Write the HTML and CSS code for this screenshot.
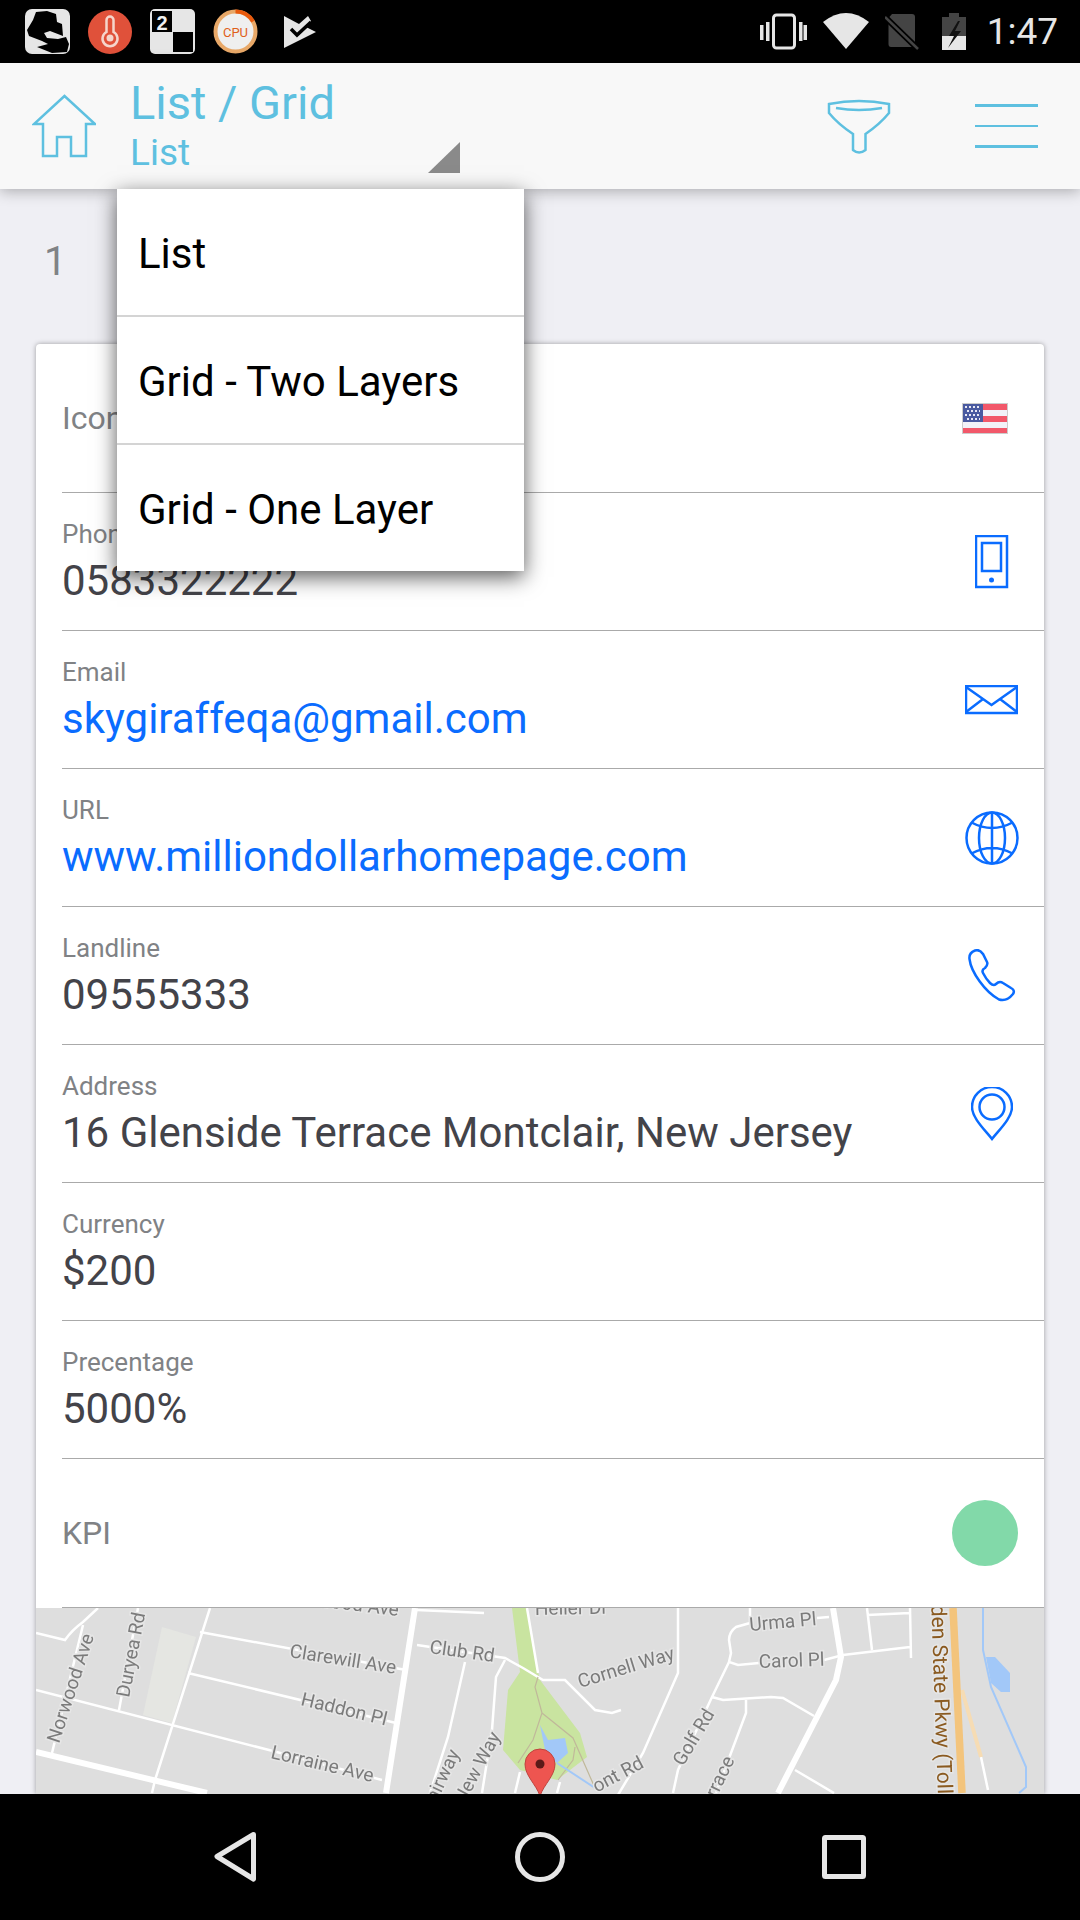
FILE: index.html
```html
<!DOCTYPE html>
<html>
<head>
	<meta charset="utf-8">
	<meta name="viewport" content="width=device-width, initial-scale=1">
	<title>List / Grid</title>
	<link rel="stylesheet" href="styles.css">
</head>
<body>

    <div class="status-bar">
        <div class="status-left">
            <svg class="glyph" width="45" height="45" viewBox="25 9 45 45">
                <rect class="light" x="25" y="9" width="45" height="45" rx="7"/>
                <path class="dark" d="M27 30 L33 20 L36 12 L47 11 L56 14 L57 22 L62 24 L63 36 L50 31 L44 33 L47 38 L58 39 L66 37 L69 44 L67 52 L52 53 L37 47 L48 44 L42 41 L29 36 Z"/>
            </svg>
            <svg class="glyph" width="44" height="44" viewBox="88 9 44 44">
                <circle class="temp-bg" cx="110" cy="31" r="22"/>
                <path class="temp-line" d="M106.500 31 V19 A3.500 3.500 0 0 1 113.500 19 V31 A7.500 7.500 0 1 1 106.500 31 Z"/>
                <circle class="temp-dot" cx="110" cy="37" r="3.500"/>
            </svg>
            <svg class="glyph" width="45" height="45" viewBox="151 9 45 45">
                <rect class="light" x="151" y="9" width="45" height="45" rx="5"/>
                <rect class="dark" x="153" y="11" width="20" height="21"/>
                <rect class="dark" x="174" y="32" width="20" height="20"/>
                <text class="two" x="163" y="30" text-anchor="middle">2</text>
            </svg>
            <svg class="glyph" width="45" height="45" viewBox="214 9 45 45">
                <circle class="cpu-bg" cx="236.500" cy="31.500" r="20"/>
                <path class="cpu-arc" d="M236.500 11.500 A20 20 0 0 1 254 21.500"/>
                <text class="cpu" x="236.500" y="36.500" text-anchor="middle">CPU</text>
            </svg>
            <svg class="glyph glyph-check" width="33" height="34" viewBox="284 15 33 34">
                <path class="light" d="M285 16 L300 24 L309 16 L312 21 L307 27 L317 32 L285 48 Z"/>
                <path class="check-line" d="M292 29 L298 35 L312 22"/>
            </svg>
        </div>
        <div class="status-right">
            <svg class="glyph" width="47" height="37" viewBox="761 13 47 37">
                <rect class="outline" x="774.500" y="15" width="21" height="33" rx="3"/>
                <path class="light" d="M761 25 H764.500 V40 H761 Z M767 22 H770.500 V41 H767 Z M800 22 H803.500 V41 H800 Z M804.500 25 H808 V40 H804.500 Z"/>
            </svg>
            <svg class="glyph" width="46" height="37" viewBox="823 13 46 37">
                <path class="light" d="M823 22 Q846 4 869 22 L846 49 Z"/>
            </svg>
            <svg class="glyph" width="34" height="37" viewBox="886 13 34 37">
                <path class="sim" d="M893 14 H913 Q916 14 916 17 V44 Q916 47 913 47 H892 Q889.500 47 889.500 44 V18 Z"/>
                <path class="sim-cut" d="M886 17 L919 49"/>
                <path class="sim-line" d="M886 17 L919 49"/>
            </svg>
            <svg class="glyph glyph-battery" width="24" height="38" viewBox="943 12 24 38">
                <path class="sim" d="M950 12 H960 V16 H967 V35 H943 V16 H950 Z"/>
                <rect class="light" x="943" y="35" width="24" height="14"/>
                <path class="bolt" d="M959 20 L950 35 H955 L949 47 L962 30 H956 L961 20 Z"/>
            </svg>
            <span class="clock">1:47</span>
        </div>
    </div>

    <div class="app-header">
        <svg class="icon-home" width="64" height="64" viewBox="32 95 64 64">
            <path class="head-line" d="M64.500 97 L34 125 H43 V157 H57 V138 H71 V157 H86 V125 H95 Z"/>
        </svg>
        <div class="spinner">
            <div class="titles">
                <div class="title">List / Grid</div>
                <div class="subtitle">List</div>
            </div>
            <svg class="caret" width="32" height="31" viewBox="0 0 32 31">
                <path d="M32 0 V31 H0 Z"/>
            </svg>
        </div>
        <svg class="icon-filter" width="64" height="56" viewBox="827 98 64 56">
            <path class="head-line" d="M829 104 Q859 98 889 104 V113 Q880 124 865.500 134 V150 Q859 155 853 150 V134 Q838 124 829 113 Z"/>
            <path class="head-line" d="M836 108 Q859 112 882 108"/>
        </svg>
        <div class="hamburger">
            <span></span>
            <span></span>
            <span></span>
        </div>
    </div>

    <div class="content">
        <div class="page-num">1</div>

        <div class="card">
            <div class="row row-tall">
                <div class="row-label">Icon</div>
                <div class="row-icon">
                    <svg class="flag" width="46" height="31" viewBox="962 402 46 31">
                        <rect class="flag-bg" x="962.500" y="402.500" width="45" height="30"/>
                        <path class="flag-red" d="M982 403 H1007 V409 H982 Z M982 415 H1007 V421 H982 Z M963 427 H1007 V432 H963 Z"/>
                        <rect class="flag-blue" x="963" y="403" width="20" height="18"/>
                        <path class="flag-stars" d="M965 406 H981 M967 410 H980 M965 414 H981 M967 418 H980"/>
                    </svg>
                </div>
            </div>
            <div class="row">
                <div class="row-text">
                    <div class="label">Phone</div>
                    <div class="value">0583322222</div>
                </div>
                <div class="row-icon">
                    <svg width="34" height="54" viewBox="974 535 34 54">
                        <rect class="blue-line" x="975" y="536" width="31" height="51"/>
                        <rect class="blue-line" x="981" y="543" width="19" height="28"/>
                        <circle class="blue-dot" cx="990.500" cy="580" r="2.500"/>
                    </svg>
                </div>
            </div>
            <div class="row">
                <div class="row-text">
                    <div class="label">Email</div>
                    <div class="value link">skygiraffeqa@gmail.com</div>
                </div>
                <div class="row-icon">
                    <svg width="53" height="30" viewBox="965 685 53 30">
                        <rect class="blue-line" x="966" y="686" width="51" height="27"/>
                        <path class="blue-line" d="M966 687 L991.500 705 L1017 687 M966 712 L983 699 M1017 712 L1000 699"/>
                    </svg>
                </div>
            </div>
            <div class="row">
                <div class="row-text">
                    <div class="label">URL</div>
                    <div class="value link">www.milliondollarhomepage.com</div>
                </div>
                <div class="row-icon">
                    <svg width="54" height="54" viewBox="964.500 810.500 54 54">
                        <circle class="blue-line" cx="991.500" cy="837.500" r="25.500"/>
                        <ellipse class="blue-line" cx="991.500" cy="837.500" rx="13" ry="25.500"/>
                        <path class="blue-line" d="M991.500 812 V863 M971 822 Q991.500 833 1012 822 M971 853 Q991.500 842 1012 853"/>
                    </svg>
                </div>
            </div>
            <div class="row">
                <div class="row-text">
                    <div class="label">Landline</div>
                    <div class="value">09555333</div>
                </div>
                <div class="row-icon">
                    <svg width="48" height="53" viewBox="968 949 48 53">
                        <path class="blue-line" d="M975 950.500 C971 952 969 955 969.500 959 C971 972 985 992 999 999.500 C1004 1001 1009 999 1013 994 C1015 991 1013 989 1011 988 L1003 983 C1000 981 998 982 996 984 C994 986 992 985 990 983 C987 980 985 977 983 973 C982 971 983 969 985 968 C987 966 988 964 987 962 L983 954 C981 951 978 949.500 975 950.500 Z"/>
                    </svg>
                </div>
            </div>
            <div class="row">
                <div class="row-text">
                    <div class="label">Address</div>
                    <div class="value">16 Glenside Terrace Montclair, New Jersey</div>
                </div>
                <div class="row-icon">
                    <svg width="42" height="54" viewBox="971 1087 42 54">
                        <path class="blue-line" d="M992 1139 C985 1130 972 1118 972 1107 A20 20 0 0 1 1012 1107 C1012 1118 999 1130 992 1139 Z"/>
                        <circle class="blue-line" cx="992" cy="1107" r="12.500"/>
                    </svg>
                </div>
            </div>
            <div class="row">
                <div class="row-text">
                    <div class="label">Currency</div>
                    <div class="value">$200</div>
                </div>
            </div>
            <div class="row">
                <div class="row-text">
                    <div class="label">Precentage</div>
                    <div class="value">5000%</div>
                </div>
            </div>
            <div class="row row-tall">
                <div class="row-label">KPI</div>
                <div class="kpi-dot"></div>
            </div>

            <svg class="map" width="1008" height="186" viewBox="36 1608 1008 186">
                <rect class="map-bg" x="36" y="1608" width="1008" height="186"/>
                <path class="map-patch" d="M162 1627 L196 1637 L172 1723 L143 1715 Z"/>
                <path class="map-park" d="M512 1608 H527 L538 1672 L540 1680 L580 1733 L587 1757 L557 1780 L520 1770 L503 1750 L508 1690 L520 1672 Z"/>
                <path class="map-water" d="M986 1657 H995 L1010 1673 V1692 H1001 L991 1683 Z M540 1725 L548 1740 L565 1738 L568 1753 L557 1763 L546 1755 Z"/>

                <path class="road" d="M36 1633 L65 1640 Q72 1630 83 1622 L98 1608 M52 1753 L83 1625 M36 1690 L269 1750 L382 1780 M210 1608 L155 1780 L152 1793 M200 1632 L406 1670 M188 1673 L396 1723 M417 1610 L484 1613 M417 1645 L505 1658 L523 1668 L543 1680 H565 L595 1710 L612 1713 L621 1710 M465 1662 L448 1737 L430 1793 M505 1660 L496 1677 L492 1730 L482 1793 M138 1608 L119 1710 M527 1608 L538 1673 M520 1772 L515 1793 M560 1782 L557 1793 M678 1608 V1673 L643 1753 L615 1800 M729 1662 L712 1697 L678 1770 L673 1793 M750 1608 V1623 L736 1627 Q729 1632 729 1640 L731 1653 L729 1662 L738 1665 L759 1663 M824 1660 L843 1655 L910 1647 M867 1608 L872 1650 M867 1615 L910 1613 M910 1608 L911 1658 M817 1618 L829 1617 M712 1697 L723 1700 L771 1697 L783 1698 L814 1716 M746 1700 V1713 L716 1793 M795 1770 L834 1793 M981 1757 L988 1790"/>
                <path class="road-wide" d="M36 1752 L207 1793 M415 1608 L386 1793 M833 1608 L841 1657 L836 1680 L778 1793"/>
                <path class="trail" d="M538 1677 L535 1687 L542 1713 L533 1740 L518 1763 M542 1713 L573 1738 L595 1788 M575 1747 L573 1760 L558 1780"/>
                <path class="river" d="M983 1608 V1650 L991 1687 L1026 1767 V1787 L1019 1793 M557 1763 L595 1788"/>
                <path class="highway-side" d="M962 1690 L981 1757"/>
                <path class="highway" d="M953 1608 L962 1793"/>

                <g class="street">
                    <text transform="translate(59 1744) rotate(-72)">Norwood Ave</text>
                    <text transform="translate(129 1698) rotate(-79)">Duryea Rd</text>
                    <text transform="translate(289 1657) rotate(9)">Clarewill Ave</text>
                    <text transform="translate(429 1653) rotate(8)">Club Rd</text>
                    <text transform="translate(300 1705) rotate(13.500)">Haddon Pl</text>
                    <text transform="translate(270 1758) rotate(13.200)">Lorraine Ave</text>
                    <text transform="translate(398 1616) rotate(7)" text-anchor="end">wood Ave</text>
                    <text transform="translate(460 1753) rotate(-65)" text-anchor="end">Fairway</text>
                    <text transform="translate(501 1736) rotate(-62)" text-anchor="end">New Way</text>
                    <text transform="translate(535 1615) rotate(-1)">Heller Dr</text>
                    <text transform="translate(580 1688) rotate(-17)">Cornell Way</text>
                    <text transform="translate(750 1631) rotate(-5)">Urma Pl</text>
                    <text transform="translate(759 1668) rotate(-2)">Carol Pl</text>
                    <text transform="translate(683 1767) rotate(-59)">Golf Rd</text>
                    <text transform="translate(735 1760) rotate(-64)" text-anchor="end">Terrace</text>
                    <text transform="translate(645 1767) rotate(-28)" text-anchor="end">ont Rd</text>
                </g>
                <text class="street-highway" transform="translate(931 1598) rotate(88)">rden State Pkwy (Toll)</text>

                <path class="pin" d="M540 1796 C536 1784 525 1776 525 1764 A15 15 0 0 1 555 1764 C555 1776 544 1784 540 1796 Z"/>
                <circle class="pin-dot" cx="540" cy="1764" r="4.500"/>
            </svg>
        </div>
    </div>

    <div class="nav-bar">
        <svg width="42" height="50" viewBox="215 1833 42 50">
            <path class="nav-line" d="M254.500 1835.500 L218 1857.500 L254.500 1880 Z"/>
        </svg>
        <svg class="nav-home" width="50" height="50" viewBox="515 1833 50 50">
            <circle class="nav-line" cx="540" cy="1858" r="22.500"/>
        </svg>
        <svg width="44" height="44" viewBox="822 1835 44 44">
            <rect class="nav-line" x="824.500" y="1837.500" width="39" height="39" rx="1"/>
        </svg>
    </div>

    <div class="dropdown">
        <div class="dropdown-item">List</div>
        <div class="dropdown-item">Grid - Two Layers</div>
        <div class="dropdown-item">Grid - One Layer</div>
    </div>

</body>
</html>
```

FILE: styles.css
```css
html, body {
    margin: 0;
    padding: 0;
}

body {
    position: relative;
    display: flex;
    flex-direction: column;
    width: 1080px;
    height: 1920px;
    overflow: hidden;
    font-family: Roboto, "Liberation Sans", sans-serif;
    background-color: #efeff4;
}

svg {
    display: block;
    flex-shrink: 0;
}

/* status bar */
.status-bar {
    display: flex;
    justify-content: space-between;
    align-items: center;
    flex-shrink: 0;
    height: 63px;
    padding: 0 22px 0 25px;
    background-color: #000;
}

.status-left,
.status-right {
    display: flex;
    align-items: center;
    gap: 18px;
}

.status-right {
    gap: 16px;
}

.glyph-check {
    margin-left: 7px;
}

.glyph-battery {
    margin-left: 7px;
}

.clock {
    margin-left: 5px;
    font-size: 37px;
    line-height: 63px;
    color: #e6e6e6;
}

.light {
    fill: #e6e6e6;
}

.dark {
    fill: #000;
}

.outline {
    fill: none;
    stroke: #e6e6e6;
    stroke-width: 3;
}

.temp-bg {
    fill: #e0513a;
}

.temp-line {
    fill: #e0513a;
    stroke: #f5d5cc;
    stroke-width: 2.500;
}

.temp-dot {
    fill: #f5d5cc;
}

.two {
    font-family: "Liberation Sans", sans-serif;
    font-size: 20px;
    font-weight: bold;
    fill: #f0f0f0;
}

.cpu-bg {
    fill: #efefef;
    stroke: #e8a868;
    stroke-width: 4;
}

.cpu-arc {
    fill: none;
    stroke: #e8590c;
    stroke-width: 4;
}

.cpu {
    font-size: 13px;
    fill: #e0601a;
}

.check-line {
    fill: none;
    stroke: #000;
    stroke-width: 3.500;
}

.sim {
    fill: #444;
}

.sim-cut {
    stroke: #000;
    stroke-width: 6;
}

.sim-line {
    stroke: #444;
    stroke-width: 2.500;
}

.bolt {
    fill: #111;
}

/* header */
.app-header {
    position: relative;
    z-index: 1;
    display: flex;
    align-items: center;
    flex-shrink: 0;
    height: 126px;
    padding-left: 32px;
    background-color: #f8f8f8;
    box-shadow: 0 2px 14px rgba(0, 0, 0, 0.3);
}

.head-line {
    fill: none;
    stroke: #5ec0e0;
    stroke-width: 2.500;
}

.spinner {
    display: flex;
    justify-content: space-between;
    align-self: stretch;
    width: 330px;
    margin-left: 34px;
}

.titles {
    padding-top: 11px;
}

.title {
    font-size: 47px;
    line-height: 57px;
    color: #5ec0e0;
}

.subtitle {
    font-size: 37px;
    line-height: 44px;
    color: #5ec0e0;
}

.caret {
    align-self: flex-end;
    margin-bottom: 16px;
    fill: #8a8a8a;
}

.icon-filter {
    margin-left: auto;
}

.hamburger {
    display: flex;
    flex-direction: column;
    gap: 18px;
    width: 63px;
    margin: 0 42px 0 84px;
}

.hamburger span {
    height: 2.500px;
    background-color: #5ec0e0;
}

/* content */
.content {
    flex: 1;
    overflow: hidden;
}

.page-num {
    height: 155px;
    padding-left: 44px;
    font-size: 40px;
    line-height: 146px;
    color: #808285;
}

.card {
    margin: 0 36px;
    border-radius: 4px 4px 0 0;
    background-color: #fff;
    box-shadow: 0 0 5px rgba(0, 0, 0, 0.35);
}

.row {
    display: flex;
    align-items: center;
    justify-content: space-between;
    box-sizing: border-box;
    height: 138px;
    margin-left: 26px;
    border-bottom: 1px solid #aaa;
}

.row-tall {
    height: 149px;
}

.row-label {
    font-size: 32px;
    color: #808285;
}

.label {
    font-size: 26px;
    line-height: 32px;
    color: #808285;
}

.value {
    margin-top: 6px;
    font-size: 42px;
    line-height: 50px;
    color: #434349;
}

.link {
    color: #0a6cff;
}

.row-icon {
    display: flex;
    justify-content: center;
    width: 53px;
    margin-right: 26px;
}

.flag {
    margin-right: 13px;
}

.flag-bg {
    fill: #f2f2f8;
    stroke: #ccc;
}

.flag-red {
    fill: #f2586a;
}

.flag-blue {
    fill: #4a5aa0;
}

.flag-stars {
    fill: none;
    stroke: #e8e8f4;
    stroke-width: 2;
    stroke-dasharray: 2 2;
}

.blue-line {
    fill: none;
    stroke: #0a6cff;
    stroke-width: 2.500;
}

.blue-dot {
    fill: #0a6cff;
}

.kpi-dot {
    width: 66px;
    height: 66px;
    margin-right: 26px;
    border-radius: 50%;
    background-color: #82d9a9;
}

/* map */
.map {
    filter: blur(0.6px);
}

.map-bg {
    fill: #dedede;
}

.map-patch {
    fill: #e5e6e2;
}

.map-park {
    fill: #c9e4a0;
}

.map-water {
    fill: #a2c8f8;
}

.road {
    fill: none;
    stroke: #fff;
    stroke-width: 2.500;
}

.road-wide {
    fill: none;
    stroke: #fff;
    stroke-width: 6;
}

.trail {
    fill: none;
    stroke: #c0b89a;
    stroke-width: 1.200;
}

.river {
    fill: none;
    stroke: #a2c8f8;
    stroke-width: 2;
}

.highway {
    fill: none;
    stroke: #f3c47c;
    stroke-width: 7.500;
}

.highway-side {
    fill: none;
    stroke: #f6dcb4;
    stroke-width: 4;
}

.street {
    font-size: 19px;
    fill: #7b7b7b;
    stroke: #e6e6e6;
    stroke-width: 3px;
    paint-order: stroke;
}

.street-highway {
    font-size: 21px;
    fill: #8a5a20;
    stroke: #e6e6e6;
    stroke-width: 3px;
    paint-order: stroke;
}

.pin {
    fill: #ee5550;
    stroke: #c0443e;
}

.pin-dot {
    fill: #5b1a18;
}

/* nav bar */
.nav-bar {
    position: relative;
    z-index: 1;
    display: flex;
    justify-content: center;
    align-items: center;
    gap: 257.500px;
    flex-shrink: 0;
    height: 126px;
    background-color: #000;
}

.nav-home {
    margin-left: 1px;
}

.nav-line {
    fill: none;
    stroke: #e6e6e6;
    stroke-width: 5;
    stroke-linejoin: round;
}

/* dropdown, lies over the page */
.dropdown {
    position: absolute;
    z-index: 2;
    top: 189px;
    left: 117px;
    width: 407px;
    background-color: #fff;
    box-shadow: 0 6px 20px rgba(0, 0, 0, 0.65);
}

.dropdown-item {
    box-sizing: border-box;
    height: 128px;
    padding-left: 21px;
    border-bottom: 2px solid #d4d4d4;
    font-size: 42px;
    line-height: 129px;
    color: #000;
}

.dropdown-item:last-child {
    height: 126px;
    border-bottom: 0;
}
```
